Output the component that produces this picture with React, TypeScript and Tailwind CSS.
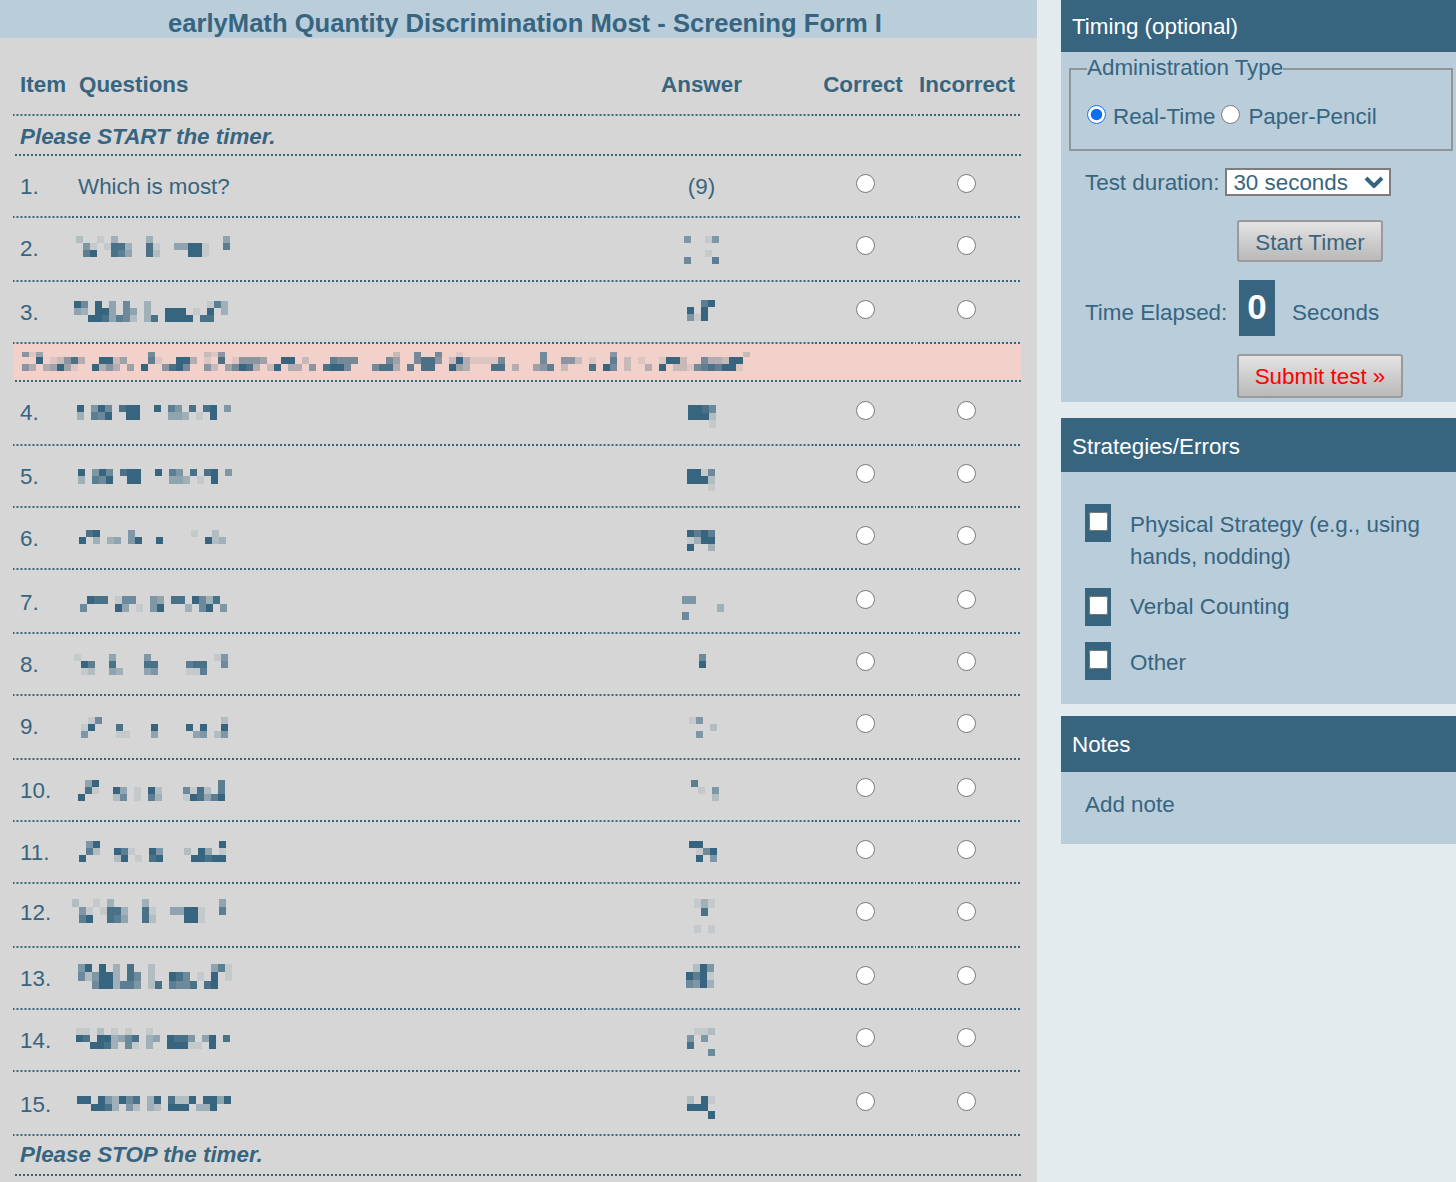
import React from 'react';

const z = (n: number) => '0'.repeat(n);
const sp = (s: string, n: number) => {
  const a: string[] = Array(n).fill('0');
  s.split(' ').forEach((t) => {
    const [i, v] = t.split(':');
    a[+i] = v;
  });
  return a.join('');
};

type M = { rows: string[]; x: number; y: number; ch?: number; trim?: number };

function Mosaic({ m, left, top, width, height }: { m: M; left: number; top: number; width: number; height: number }) {
  const ch = m.ch ?? 7;
  const rects: React.ReactNode[] = [];
  m.rows.forEach((r, ri) => {
    r.split('').forEach((c, ci) => {
      const v = +c;
      if (!v) return;
      const cut = ri === 0 && m.trim ? m.trim : 0;
      rects.push(
        <rect
          key={ri + '-' + ci}
          x={m.x - left + ci * 7}
          y={m.y - top + ri * ch + cut}
          width={7}
          height={ch - cut}
          fill="#37657f"
          fillOpacity={v === 9 ? 1 : v / 9}
          shapeRendering="crispEdges"
        />
      );
    });
  });
  return (
    <svg width={width} height={height} className="block absolute left-0 top-0">
      {rects}
    </svg>
  );
}

type Row = {
  n: string;
  top: number;
  h: string;
  px: number;
  q?: M;
  a?: M;
  tx: string;
  rd: string;
};

const r2q = ['2001030000300000000004', '0510188300810044991007', '0790087400820000991000'];
const r4q = ['9059608990090750808905', '3076900990000443010900'];

const rows: Row[] = [
  { n: '1.', top: 156, h: 'h-[62px]', px: 62, tx: 'pt-[2px]', rd: 'mb-[6px]' },
  {
    n: '2.', top: 218, h: 'h-[64px]', px: 64, tx: 'pb-0', rd: 'mb-[8px]',
    q: { x: 76, y: 236, rows: r2q },
    a: { x: 684, y: 236, rows: ['50015', '00000', '00010', '60007'] },
  },
  {
    n: '3.', top: 282, h: 'h-[62px]', px: 62, tx: 'pt-[2px]', rd: 'mb-[6px]',
    q: { x: 74, y: 301, rows: ['96090406003' + z(8) + '173', '4309940640300999010903', '0099847620380999908800'] },
    a: { x: 687, y: 300, rows: ['0079', '9090', '5190'] },
  },
];

const rows2: Row[] = [
  {
    n: '4.', top: 382, h: 'h-[64px]', px: 64, tx: 'pb-0', rd: 'mb-[6px]',
    q: { x: 77, y: 405, ch: 7.3, rows: r4q },
    a: { x: 688, y: 405, ch: 7.6, rows: ['9986', '9992', '0001'] },
  },
  {
    n: '5.', top: 446, h: 'h-[62px]', px: 62, tx: 'pt-[2px]', rd: 'mb-[6px]',
    q: { x: 78, y: 469, ch: 7.3, rows: r4q },
    a: { x: 687, y: 469, ch: 7.3, rows: ['9916', '9992', '0001'] },
  },
  {
    n: '6.', top: 508, h: 'h-[62px]', px: 62, tx: 'pt-[2px]', rd: 'mb-[6px]',
    q: { x: 79, y: 530, rows: ['089' + z(4) + '5' + z(8) + '1002' + '0', '903034059009' + z(6) + '923'] },
    a: { x: 687, y: 530, rows: ['9797', '1399', '9003'] },
  },
  {
    n: '7.', top: 570, h: 'h-[64px]', px: 64, tx: 'pt-[4px]', rd: 'mb-[4px]',
    q: { x: 80, y: 596, ch: 8, rows: ['098801660054088096380', '600009401059000306905'] },
    a: { x: 682, y: 596, ch: 8, rows: ['550000', '000003', '600000'] },
  },
  {
    n: '8.', top: 634, h: 'h-[62px]', px: 62, tx: 'pt-[2px]', rd: 'mb-[6px]',
    q: { x: 74, y: 654, rows: ['1000040000500000000015', '0970080000880000788006', '0120043000450000117000'] },
    a: { x: 699, y: 654, rows: ['6', '9'] },
  },
  {
    n: '9.', top: 696, h: 'h-[64px]', px: 64, tx: 'pb-0', rd: 'mb-[8px]',
    q: { x: 81, y: 717, rows: ['016' + z(17) + '2', '190008000090000909009', '500001100040000045025'] },
    a: { x: 689, y: 717, rows: ['1500', '0002', '0500'] },
  },
  {
    n: '10.', top: 760, h: 'h-[62px]', px: 62, tx: 'pt-[2px]', rd: 'mb-[6px]',
    q: { x: 78, y: 780, rows: ['049' + z(17) + '7', '081009401092000618207', '900002601073000198479'] },
    a: { x: 691, y: 780, rows: ['7000', '0105', '0002'] },
  },
  {
    n: '11.', top: 822, h: 'h-[62px]', px: 62, tx: 'pt-[2px]', rd: 'mb-[6px]',
    q: { x: 79, y: 841, rows: ['059' + z(17) + '9', '072009710095000209401', '900002901089000099899'] },
    a: { x: 689, y: 841, rows: ['9900', '0169', '0905'] },
  },
  {
    n: '12.', top: 884, h: 'h-[64px]', px: 64, tx: 'pb-[4px]', rd: 'mb-[8px]',
    q: { x: 72, y: 899, ch: 8, rows: r2q },
    a: { x: 694, y: 899, ch: 8.5, rows: ['131', '080', '000', '101'] },
  },
  {
    n: '13.', top: 948, h: 'h-[62px]', px: 62, tx: 'pt-[2px]', rd: 'mb-[6px]',
    q: {
      x: 78, y: 964, ch: 8.3,
      rows: ['59090308002' + z(8) + '471', '6259930860200986010901', '0069937750280766808900'],
    },
    a: { x: 686, y: 964, ch: 8, rows: ['0295', '9791', '6593'] },
  },
  {
    n: '14.', top: 1010, h: 'h-[62px]', px: 62, tx: 'pt-[2px]', rd: 'mb-[6px]',
    q: { x: 76, y: 1028, rows: ['11020101001' + z(11), '9809934680340988504908', '0099830610300999110900'] },
    a: { x: 687, y: 1028, rows: ['0112', '5050', '8000', '0006'] },
  },
  {
    n: '15.', top: 1072, h: 'h-[64px]', px: 64, tx: 'pt-[4px]', rd: 'mb-[4px]',
    q: { x: 77, y: 1096, ch: 7.6, rows: ['9909539680390822909949', '0099830520320999033900'] },
    a: { x: 687, y: 1096, ch: 7.6, rows: ['2091', '9990', '0009'] },
  },
];

const bannerA = [
  '0:5 1:1 2:4 18:6 26:2 27:1 28:5 53:2 56:6 59:6 62:1 74:6 84:5 103:2',
  '2:9 4:1 5:2 6:5 7:8 8:3 11:9 12:9 13:2 14:4 18:7 19:1 22:9 23:9 24:3 26:1 28:8 30:1 31:5 32:5 33:5 34:4 37:9 38:9 40:2 44:7 45:6 46:6 47:6 52:6 53:4 56:6 57:8 58:8 59:5 61:2 62:9 63:3 64:1 65:1 66:1 67:1 68:6 74:6 77:5 78:5 79:2 81:1 84:7 86:2 88:1 91:1 92:9 93:9 94:2 97:6 98:3 99:3 100:2 101:9 102:9',
  '0:5 1:3 3:3 4:4 5:9 6:4 7:1 10:9 11:3 12:5 13:3 15:4 17:9 20:5 21:8 22:9 23:6 26:5 27:2 29:4 30:6 31:9 32:8 33:3 35:2 36:9 38:3 39:3 41:5 43:8 44:9 45:9 46:6 50:6 51:8 52:8 53:3 55:7 57:8 58:8 61:9 62:4 63:3 67:8 68:8 70:3 73:4 74:5 75:7 77:2 81:8 83:9 84:6 86:2 89:3 91:9 93:2 94:2 95:1 96:6 97:7 98:8 99:7 100:9 101:9 102:1',
].map((s) => sp(s, 104));

const dots =
  'border-b-2 border-transparent bg-origin-border bg-bottom bg-repeat-x bg-[length:4px_2px] bg-[linear-gradient(90deg,#37657f_50%,transparent_50%)]';
const cell = dots + ' relative flex items-center';
const cols = 'grid grid-cols-[59px_516px_227px_100px_106px]';

function Radio({ name, cls }: { name: string; cls: string }) {
  return <input type="radio" name={name} className={'w-[19px] h-[19px] m-0 ' + cls} />;
}

function QRow({ r }: { r: Row }) {
  return (
    <div className={cols + ' ' + r.h}>
      <div className={cell + ' pl-[7px] ' + r.tx}>{r.n}</div>
      <div className={cell + ' pl-[6px] ' + r.tx}>
        {r.q ? (
          <Mosaic m={r.q} left={72} top={r.top} width={516} height={r.px - 2} />
        ) : (
          'Which is most?'
        )}
      </div>
      <div className={cell + ' justify-center ' + r.tx}>
        {r.a ? <Mosaic m={r.a} left={588} top={r.top} width={227} height={r.px - 2} /> : '(9)'}
      </div>
      <div className={cell + ' justify-center'}>
        <Radio name={'c' + r.n} cls={r.rd} />
      </div>
      <div className={cell + ' justify-center pr-[4px]'}>
        <Radio name={'c' + r.n} cls={r.rd} />
      </div>
    </div>
  );
}

function NoteRow({ text, cls }: { text: string; cls: string }) {
  return <div className={dots + ' h-[40px] flex items-center pl-[7px] font-bold italic ' + cls}>{text}</div>;
}

function PanelHead({ text, h }: { text: string; h: string }) {
  return <div className={'bg-[#37657f] text-white flex items-center pl-[11px] ' + h}>{text}</div>;
}

function Check() {
  return (
    <div className="w-[26px] h-[38px] bg-[#37657f] pl-[4px] pt-[8px] shrink-0">
      <input type="checkbox" className="w-[19px] h-[19px] m-0 block" />
    </div>
  );
}

const btn =
  'block border-2 border-[#9a9a9a] rounded-[3px] bg-gradient-to-b from-[#e4e4e4] to-[#b9b9b9] ml-[176px]';

export default function App() {
  return (
    <div className="w-[1456px] h-[1182px] overflow-hidden bg-[#e4ebef] text-[#37657f] text-[22.4px] leading-[26px] font-['Liberation_Sans',Arial,sans-serif] flex items-start">
      <main className="w-[1037px] h-[1182px] bg-[#d6d6d6] shrink-0">
        <h1 className="h-[38px] bg-[#b9cddb] flex items-center justify-center pl-[13px] pt-[7px] font-bold text-[25.6px]">
          earlyMath Quantity Discrimination Most - Screening Form I
        </h1>
        <div className="pl-[13px] pr-[16px]">
          <div className={cols + ' h-[78px] font-bold'}>
            <div className={cell + ' pl-[7px] pt-[18px]'}>Item</div>
            <div className={cell + ' pl-[7px] pt-[18px]'}>Questions</div>
            <div className={cell + ' justify-center pt-[18px]'}>Answer</div>
            <div className={cell + ' justify-center pt-[18px] pr-[4px]'}>Correct</div>
            <div className={cell + ' justify-center pt-[18px] pr-[2px]'}>Incorrect</div>
          </div>
          <NoteRow text="Please START the timer." cls="pt-[3px]" />
          {rows.map((r) => (
            <QRow key={r.n} r={r} />
          ))}
          <div className={dots + ' h-[38px] relative'}>
            <div className="h-[36px] bg-[#f2d1cb]" />
            <Mosaic m={{ x: 22, y: 350, rows: bannerA, trim: 2 }} left={13} top={344} width={1008} height={36} />
          </div>
          {rows2.map((r) => (
            <QRow key={r.n} r={r} />
          ))}
          <NoteRow text="Please STOP the timer." cls="pt-0" />
        </div>
      </main>

      <aside className="w-[395px] ml-[24px] shrink-0">
        <section className="bg-[#b9cddb] h-[402px]">
          <PanelHead text="Timing (optional)" h="h-[52px] pt-[2px]" />
          <fieldset className="border-2 border-[#8f9599] ml-[8px] mr-[3px] mt-[4px] h-[95px] pl-[16px]">
            <legend className="h-[26px] leading-[24px]">Administration Type</legend>
            <div className="flex items-center mt-[22px]">
              <input type="radio" name="admin" defaultChecked className="w-[19px] h-[19px] m-0 mb-[5px] accent-[#0b6ff0]" />
              <span className="ml-[7px]">Real-Time</span>
              <input type="radio" name="admin" className="w-[19px] h-[19px] m-0 mb-[5px] ml-[6px]" />
              <span className="ml-[8px]">Paper-Pencil</span>
            </div>
          </fieldset>
          <div className="flex items-center ml-[24px] mt-[17px] h-[28px]">
            <span className="pt-[2px]">Test duration:</span>
            <div className="relative ml-[6px]">
              <select className="block appearance-none w-[166px] h-[28px] bg-white border-2 border-[#7d7d7d] pl-[6px] outline-none">
                <option>30 seconds</option>
              </select>
              <svg width="20" height="12" viewBox="0 0 20 12" className="absolute right-[7px] top-[8px]">
                <path d="M2 2 L10 10 L18 2" fill="none" stroke="#37657f" strokeWidth="4" />
              </svg>
            </div>
          </div>
          <button className={btn + ' w-[146px] h-[42px] mt-[24px] pt-[3px]'}>Start Timer</button>
          <div className="flex items-center ml-[24px] mt-[18px] h-[56px]">
            <span className="w-[154px] pt-[10px]">Time Elapsed:</span>
            <span className="w-[36px] h-[56px] bg-[#37657f] text-white font-bold text-[35px] flex items-center justify-center pb-[2px]">0</span>
            <span className="ml-[17px] pt-[10px]">Seconds</span>
          </div>
          <button className={btn + ' w-[166px] h-[44px] mt-[18px] pt-[2px] text-[#ff0000]'}>Submit test »</button>
        </section>

        <section className="bg-[#b9cddb] mt-[16px] pb-[24px]">
          <PanelHead text="Strategies/Errors" h="h-[54px] pt-[3px]" />
          <div className="flex gap-[19px] pl-[24px] pt-[32px]">
            <Check />
            <div className="pt-[5px] leading-[32px] w-[310px]">Physical Strategy (e.g., using hands, nodding)</div>
          </div>
          <div className="flex gap-[19px] pl-[24px] mt-[15px]">
            <Check />
            <div className="pt-[3px] leading-[32px]">Verbal Counting</div>
          </div>
          <div className="flex gap-[19px] pl-[24px] mt-[16px]">
            <Check />
            <div className="pt-[5px] leading-[32px]">Other</div>
          </div>
        </section>

        <section className="bg-[#b9cddb] mt-[12px] h-[128px]">
          <PanelHead text="Notes" h="h-[56px] pt-[2px]" />
          <div className="pl-[24px] pt-[20px]">Add note</div>
        </section>
      </aside>
    </div>
  );
}
